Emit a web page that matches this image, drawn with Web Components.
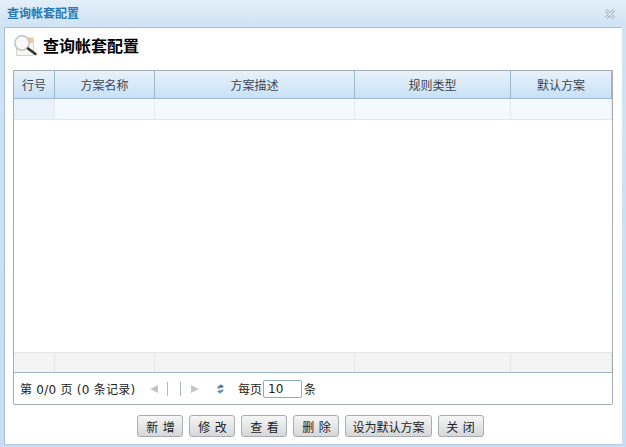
<!DOCTYPE html>
<html lang="zh">
<head>
<meta charset="utf-8">
<title>查询帐套配置</title>
<style>
html, body { margin: 0; padding: 0; height: 100%; }
body { font-family: "Liberation Sans", "Noto Sans CJK SC", sans-serif; overflow: hidden; }
</style>
</head>
<body>
<config-window caption="查询帐套配置">
  <page-heading>查询帐套配置</page-heading>
  <plan-grid></plan-grid>
  <button-bar slot="footer">
    <tool-button>新 增</tool-button>
    <tool-button>修 改</tool-button>
    <tool-button>查 看</tool-button>
    <tool-button>删 除</tool-button>
    <tool-button>设为默认方案</tool-button>
    <tool-button>关 闭</tool-button>
  </button-bar>
</config-window>

<script>
class ConfigWindow extends HTMLElement {
  constructor() {
    super();
    this.attachShadow({ mode: "open" });
    this.shadowRoot.innerHTML = `
<style>
:host {
  display: flex;
  flex-direction: column;
  width: 626px;
  height: 447px;
  box-sizing: border-box;
  padding: 0 4px 2px 4px;
  background: linear-gradient(#e3eff9 0, #cfe3f5 27px, #c6ddf3 100%);
  font-size: 12px;
}
header {
  flex: 0 0 27px;
  display: flex;
  align-items: center;
  justify-content: space-between;
  margin-left: 3px;
  padding-bottom: 3px;
  box-sizing: border-box;
  color: #2a78b4;
  font-weight: bold;
  font-size: 12px;
}
svg { margin-right: 6px; margin-top: 4px; }
.body {
  flex: 1;
  display: flex;
  flex-direction: column;
  background: #fff;
  border: 1px solid #a9bfd3;
  border-bottom-color: #b7cde2;
  border-right: 0;
  box-sizing: border-box;
  padding: 0 9px 0 8px;
  min-height: 0;
}
.foot { flex: 0 0 auto; }
</style>
<header><span></span>
<svg width="12" height="12" viewBox="0 0 12 12"><path d="M2 2 L10 10 M10 2 L2 10" stroke="#8fa3b3" stroke-width="3" fill="none"/><path d="M2 2 L10 10 M10 2 L2 10" stroke="#eef4f8" stroke-width="1.2" fill="none"/></svg>
</header>
<div class="body">
  <slot></slot>
  <div class="foot"><slot name="footer"></slot></div>
</div>`;
  }
  connectedCallback() {
    this.shadowRoot.querySelector("header span").textContent = this.getAttribute("caption");
  }
}
customElements.define("config-window", ConfigWindow);

class PageHeading extends HTMLElement {
  constructor() {
    super();
    this.attachShadow({ mode: "open" });
    this.shadowRoot.innerHTML = `
<style>
:host {
  display: flex;
  align-items: center;
  gap: 5px;
  height: 42px;
  box-sizing: border-box;
  padding-bottom: 8px;
  font-size: 16px;
  font-weight: bold;
  color: #000;
}
svg { flex: none; }
</style>
<svg width="25" height="25" viewBox="0 0 25 25">
  <path d="M3.5 8 H20.5 V22.5 H3.5 Z" fill="#f8f7f1" stroke="#d4d2c8"/>
  <path d="M13 4.5 H20.5 V10 H13 Z" fill="#ecc99a"/>
  <circle cx="9" cy="10" r="7.2" fill="#f7f8f9" fill-opacity=".9" stroke="#bcc2c6" stroke-width="1.5"/>
  <path d="M15 15.5 L22.5 21" stroke="#34312d" stroke-width="2.6" stroke-linecap="round"/>
</svg>
<span><slot></slot></span>`;
  }
}
customElements.define("page-heading", PageHeading);

class PlanGrid extends HTMLElement {
  constructor() {
    super();
    this.attachShadow({ mode: "open" });
    const cols = ["行号", "方案名称", "方案描述", "规则类型", "默认方案"];
    const cells = (cls, withText) => cols.map((c, i) =>
      `<div class="${cls}${i === 0 ? " first" : ""}">${withText ? c : ""}</div>`).join("");
    this.shadowRoot.innerHTML = `
<style>
:host {
  display: flex;
  flex-direction: column;
  height: 335px;
  box-sizing: border-box;
  border: 1px solid #a3acb4;
  border-radius: 0 0 2px 2px;
  font-size: 12px;
  color: #333;
}
.row {
  display: grid;
  grid-template-columns: 41px 100px 200px 156px 1fr;
}
.head { height: 28px; border-bottom: 1px solid #9fbbd2; box-sizing: border-box; }
.hc {
  display: flex;
  align-items: center;
  justify-content: center;
  background: linear-gradient(#e9f2fb, #c8e1f7);
  border-right: 1px solid #9db7cc;
  color: #3c4650;
  padding-bottom: 1px;
}
.data { height: 21px; box-sizing: border-box; border-bottom: 1px solid #dfe9f1; }
.dc { background: #f3f9fe; border-right: 1px solid #e2ecf3; }
.dc.first { background: #eaf2f9; }
.space { flex: 1; }
.sum { height: 21px; box-sizing: border-box; border-bottom: 1px solid #9fb4c6; border-top: 1px solid #e6e6e6; }
.sc { background: #f4f4f4; border-right: 1px solid #e6e6e6; }
</style>
<div class="row head">${cells("hc", true)}</div>
<div class="row data">${cells("dc", false)}</div>
<div class="space"></div>
<div class="row sum">${cells("sc", false)}</div>
<grid-pager></grid-pager>`;
  }
}
customElements.define("plan-grid", PlanGrid);

class GridPager extends HTMLElement {
  constructor() {
    super();
    this.attachShadow({ mode: "open" });
    this.shadowRoot.innerHTML = `
<style>
:host {
  display: flex;
  align-items: center;
  height: 31px;
  padding-left: 6px;
  font-size: 12px;
  color: #222;
}
.info { width: 129px; white-space: nowrap; font-family: "DejaVu Sans", "Noto Sans CJK SC", sans-serif; letter-spacing: .25px; }
.icons { display: flex; align-items: center; width: 89px; }
.sep { width: 1px; height: 14px; background: #a9bccb; }
input {
  width: 33px; height: 16px; box-sizing: content-box;
  margin: 0 2px 0 1px; padding: 0 0 0 4px;
  border: 1px solid #8fa9be; border-radius: 2px;
  font: 12px "DejaVu Sans", sans-serif; color: #222; background: #fff;
}
svg { display: block; flex: none; }
</style>
<span class="info">第 0/0 页 (0 条记录)</span>
<span class="icons">
  <svg width="10" height="10" viewBox="0 0 10 10" style="margin-right:8px"><path d="M9 1 V9 L1 5 Z" fill="#c3c6c8"/></svg>
  <span class="sep"></span>
  <span class="sep" style="margin-left:12px"></span>
  <svg width="10" height="10" viewBox="0 0 10 10" style="margin-left:9px"><path d="M1 1 V9 L9 5 Z" fill="#c3c6c8"/></svg>
  <svg width="7" height="10" viewBox="0 0 7 10" style="margin-left:17px"><path id="a" d="M0.5 4.5 C0.5 2 2 1.5 3.5 1.5 V0 L7 2.5 L3.5 4.6 V3.4 C2.8 3.4 2.3 3.8 2.3 4.5 Z" fill="#4d7398"/><path d="M6.5 5.5 C6.5 8 5 8.5 3.5 8.5 V10 L0 7.5 L3.5 5.4 V6.6 C4.2 6.6 4.7 6.2 4.7 5.5 Z" fill="#6b8fb0"/></svg>
</span>
<span>每页</span><input value="10"><span>条</span>`;
  }
}
customElements.define("grid-pager", GridPager);

class ButtonBar extends HTMLElement {
  constructor() {
    super();
    this.attachShadow({ mode: "open" });
    this.shadowRoot.innerHTML = `
<style>
:host {
  display: flex;
  justify-content: center;
  gap: 6px;
  padding: 10px 0 0 0;
  margin-right: 5px;
}
</style>
<slot></slot>`;
  }
}
customElements.define("button-bar", ButtonBar);

class ToolButton extends HTMLElement {
  constructor() {
    super();
    this.attachShadow({ mode: "open" });
    this.shadowRoot.innerHTML = `
<style>
:host {
  display: inline-flex;
  align-items: center;
  justify-content: center;
  box-sizing: border-box;
  min-width: 46px;
  height: 22px;
  padding: 0 6px;
  border: 1px solid #a7acaf;
  border-radius: 3px;
  background: linear-gradient(#f6f6f6, #e4e5e6 55%, #d5d7d9);
  font-size: 12px;
  word-spacing: 1px;
  color: #222;
  white-space: pre;
}
</style>
<slot></slot>`;
  }
}
customElements.define("tool-button", ToolButton);
</script>
</body>
</html>
